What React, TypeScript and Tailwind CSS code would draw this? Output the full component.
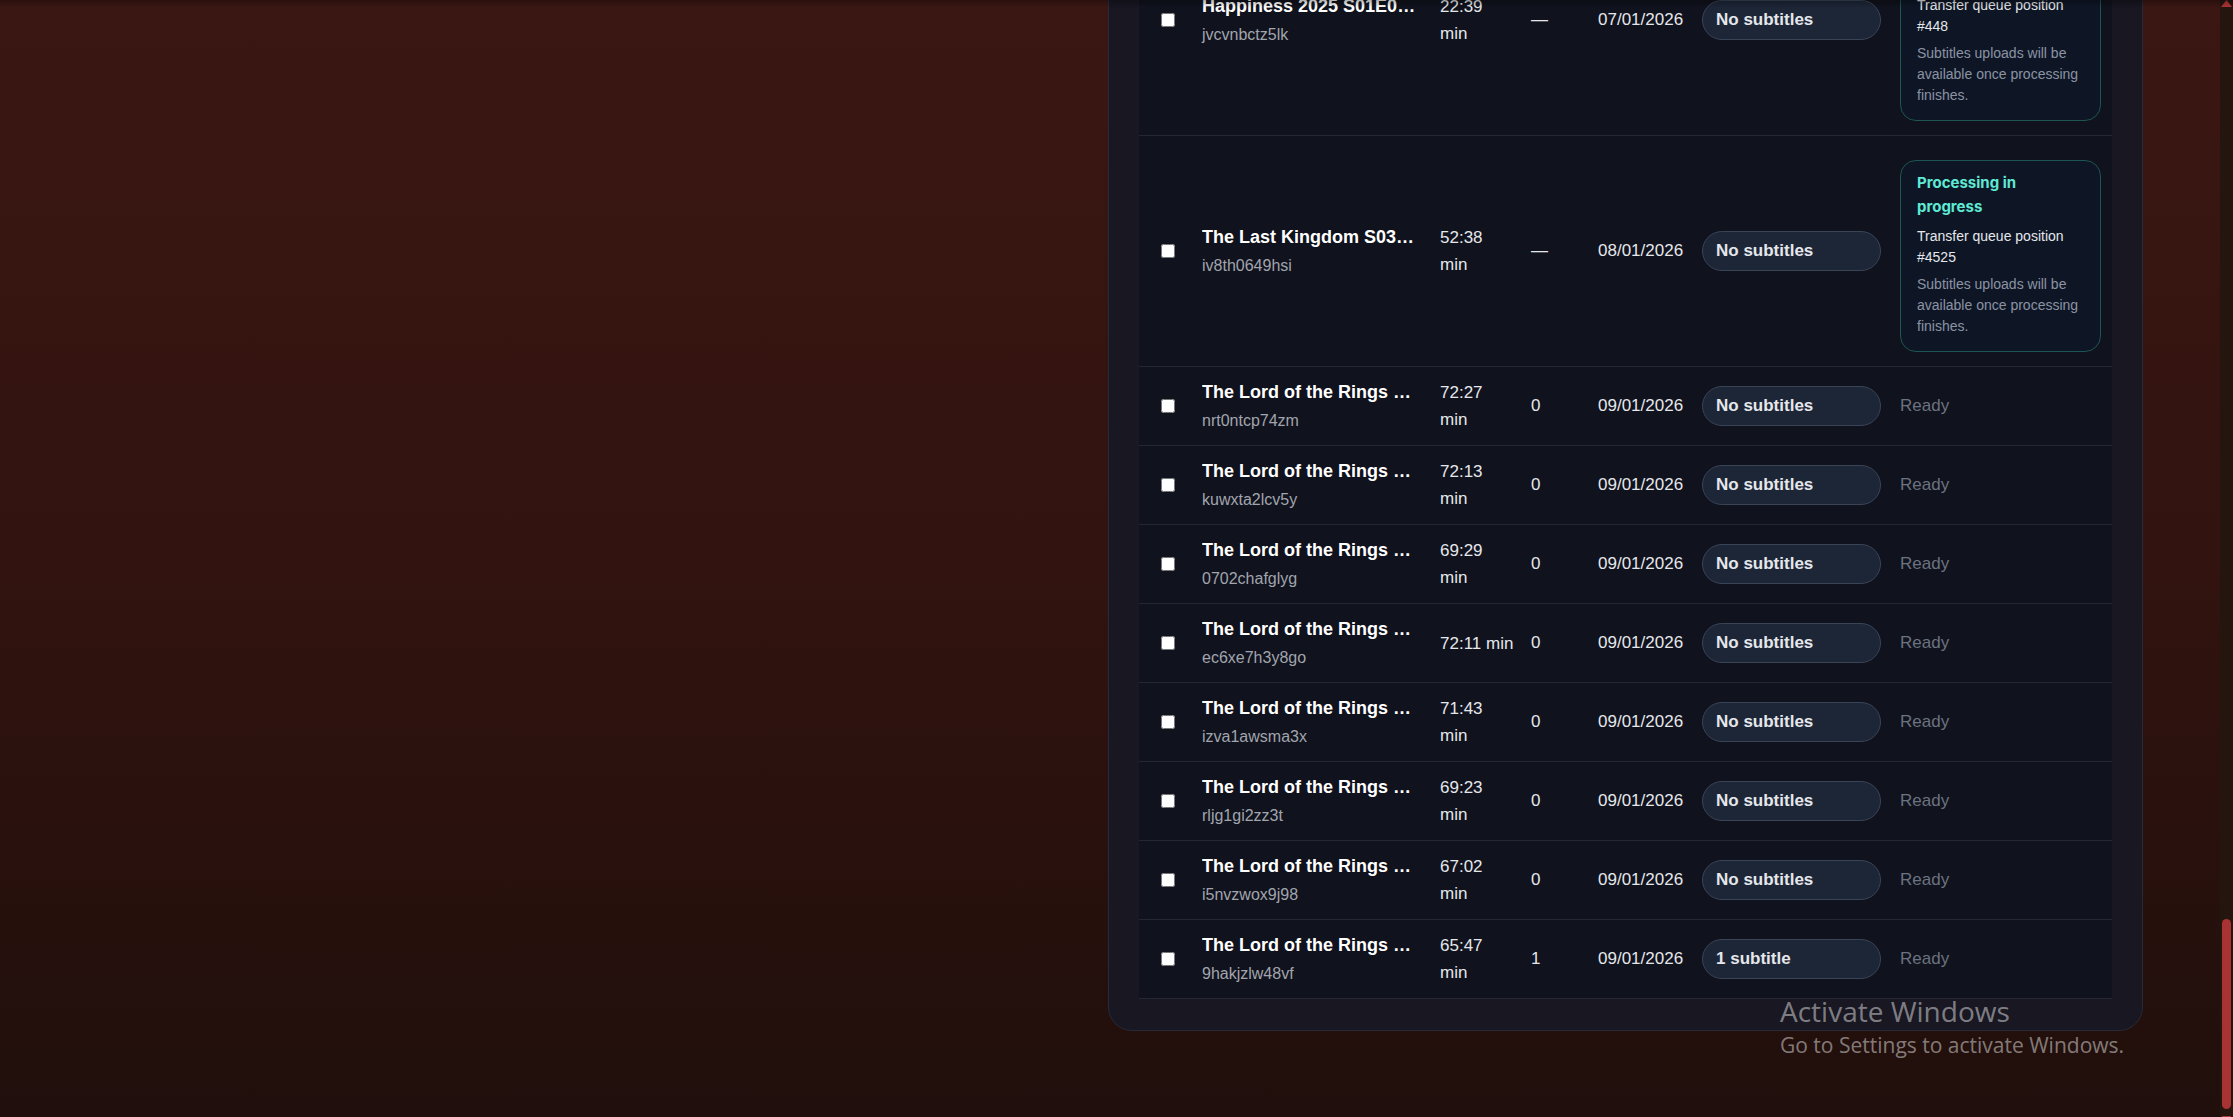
import { Fragment } from "react";

type Row = {
  title: string;
  id: string;
  duration: string[];
  count: string;
  date: string;
  subs: string;
  queue?: string;
};

const ROWS: Row[] = [
  { title: "Happiness 2025 S01E07 1080p WEB", id: "jvcvnbctz5lk", duration: ["22:39", "min"], count: "—", date: "07/01/2026", subs: "No subtitles", queue: "#448" },
  { title: "The Last Kingdom S03E05", id: "iv8th0649hsi", duration: ["52:38", "min"], count: "—", date: "08/01/2026", subs: "No subtitles", queue: "#4525" },
  { title: "The Lord of the Rings The Rings of Power S02E01", id: "nrt0ntcp74zm", duration: ["72:27", "min"], count: "0", date: "09/01/2026", subs: "No subtitles" },
  { title: "The Lord of the Rings The Rings of Power S02E02", id: "kuwxta2lcv5y", duration: ["72:13", "min"], count: "0", date: "09/01/2026", subs: "No subtitles" },
  { title: "The Lord of the Rings The Rings of Power S02E03", id: "0702chafglyg", duration: ["69:29", "min"], count: "0", date: "09/01/2026", subs: "No subtitles" },
  { title: "The Lord of the Rings The Rings of Power S02E04", id: "ec6xe7h3y8go", duration: ["72:11 min"], count: "0", date: "09/01/2026", subs: "No subtitles" },
  { title: "The Lord of the Rings The Rings of Power S02E05", id: "izva1awsma3x", duration: ["71:43", "min"], count: "0", date: "09/01/2026", subs: "No subtitles" },
  { title: "The Lord of the Rings The Rings of Power S02E06", id: "rljg1gi2zz3t", duration: ["69:23", "min"], count: "0", date: "09/01/2026", subs: "No subtitles" },
  { title: "The Lord of the Rings The Rings of Power S02E07", id: "i5nvzwox9j98", duration: ["67:02", "min"], count: "0", date: "09/01/2026", subs: "No subtitles" },
  { title: "The Lord of the Rings The Rings of Power S02E08", id: "9hakjzlw48vf", duration: ["65:47", "min"], count: "1", date: "09/01/2026", subs: "1 subtitle" },
];

function QueueBox({ position }: { position: string }) {
  return (
    <div className="mt-[12px] mb-[2px] w-[201px] rounded-2xl border border-[#1d5552] bg-[#0e1626] px-4 pt-[10px] pb-[14px]">
      <p className="font-['Inter','Noto_Sans',sans-serif] text-[15px] leading-[24px] font-bold text-[#5eead4]">
        Processing in progress
      </p>
      <p className="mt-[7px] text-[14px] leading-[21px] text-[#e5e7eb]">
        Transfer queue position {position}
      </p>
      <p className="mt-[6px] text-[14px] leading-[21px] text-[#8b93a3]">
        Subtitles uploads will be available once processing finishes.
      </p>
    </div>
  );
}

function VideoRow({ row }: { row: Row }) {
  return (
    <div className="grid grid-cols-[51px_238px_91px_67px_104px_198px_224px] items-center border-b border-[#242633] py-3">
      <div className="flex pl-[22px]">
        <input type="checkbox" className="h-[14px] w-[14px]" />
      </div>
      <div className="pl-3">
        <p className="max-w-[215px] truncate text-[18px] leading-[27px] font-bold text-white">{row.title}</p>
        <p className="mt-[3px] text-[16px] leading-[24px] text-[#a1a5ad]">{row.id}</p>
      </div>
      <div className="pl-3 text-[17px] leading-[27px] whitespace-nowrap text-[#e5e7eb]">
        {row.duration.map((line, i) => (
          <Fragment key={i}>
            {i > 0 && <br />}
            {line}
          </Fragment>
        ))}
      </div>
      <div className="pl-3 text-[17px] text-[#e5e7eb]">{row.count}</div>
      <div className="pl-3 text-[17px] text-[#e5e7eb]">{row.date}</div>
      <div className="pl-3">
        <div className="flex h-10 w-[179px] items-center rounded-full border border-[#3a4457] bg-[#1d2637] pl-[13px] text-[17px] font-bold text-[#e5e7eb]">
          {row.subs}
        </div>
      </div>
      <div className="pl-3">
        {row.queue ? (
          <QueueBox position={row.queue} />
        ) : (
          <span className="text-[17px] text-[#6b7280]">Ready</span>
        )}
      </div>
    </div>
  );
}

export default function App() {
  return (
    <div className="relative flex h-[1117px] w-full overflow-hidden bg-gradient-to-b from-[#3b1713] via-[#32130f] to-[#200f0c] font-['Liberation_Sans',Arial,sans-serif]">
      {/* Page, scrolled to the bottom */}
      <main className="flex h-full flex-1 flex-col justify-end pb-[86px]">
        <div className="flex justify-end pr-[77px]">
          <section className="w-[1035px] rounded-3xl border border-[#262a3a] bg-[#181722] px-[30px] pb-[31px]">
            <div className="bg-[#10121d]">
              {ROWS.map((row) => (
                <VideoRow key={row.id} row={row} />
              ))}
            </div>
          </section>
        </div>
      </main>

      {/* Scrollbar */}
      <div className="flex w-[13px] flex-col items-center bg-[#25150f]">
        <svg width="11" height="7" viewBox="0 0 11 7">
          <polygon points="5.5,0 11,7 0,7" fill="#b03535" />
        </svg>
        <div className="flex-1" />
        <div className="mb-[7px] h-[190px] w-[9px] rounded-full bg-[#a83333]" />
        <div className="h-[1px] w-[9px] bg-[#b03535]" />
      </div>

      <div className="pointer-events-none absolute inset-x-0 top-0 h-2 bg-gradient-to-b from-black/30 to-transparent" />

      {/* Windows watermark */}
      <div className="pointer-events-none absolute top-[992px] left-[1780px] font-['Open_Sans','Noto_Sans',sans-serif] text-white/45">
        <p className="text-[28px] leading-[38px]">Activate Windows</p>
        <p className="text-[21px] leading-[30px]">Go to Settings to activate Windows.</p>
      </div>
    </div>
  );
}
